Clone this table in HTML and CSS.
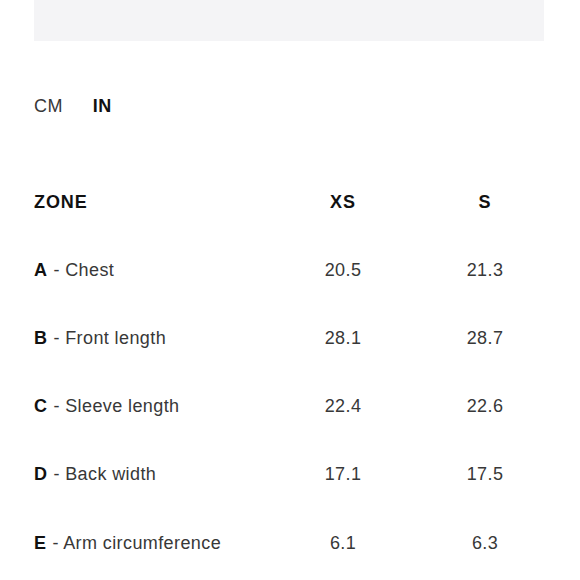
FILE: index.html
```html
<!DOCTYPE html>
<html>
<head>
<meta charset="utf-8">
<link rel="stylesheet" href="styles.css">
</head>
<body>
<div class="page">
  <div class="banner"></div>
  <div class="units">
    <span class="unit">CM</span>
    <span class="unit active">IN</span>
  </div>
  <div class="table">
    <div class="cell head">ZONE</div>
    <div class="cell head num">XS</div>
    <div class="cell head num">S</div>

    <div class="cell"><b>A</b> - Chest</div>
    <div class="cell num">20.5</div>
    <div class="cell num">21.3</div>

    <div class="cell"><b>B</b> - Front length</div>
    <div class="cell num">28.1</div>
    <div class="cell num">28.7</div>

    <div class="cell"><b>C</b> - Sleeve length</div>
    <div class="cell num">22.4</div>
    <div class="cell num">22.6</div>

    <div class="cell"><b>D</b> - Back width</div>
    <div class="cell num">17.1</div>
    <div class="cell num">17.5</div>

    <div class="cell"><b>E</b> - Arm circumference</div>
    <div class="cell num">6.1</div>
    <div class="cell num">6.3</div>
  </div>
</div>
</body>
</html>
```
FILE: styles.css
```css
html, body {
  margin: 0;
  padding: 0;
  background: #fff;
}
body {
  font-family: "Liberation Sans", Arial, sans-serif;
  font-size: 18px;
  letter-spacing: 0.4px;
  color: #383838;
}
.page {
  width: 510px;
  padding-left: 34px;
}
.banner {
  height: 41px;
  background: #f4f4f6;
}
.units {
  display: flex;
  gap: 30px;
  margin-top: 55px;
  line-height: 20px;
}
.unit.active {
  font-weight: bold;
  color: #111;
}
.table {
  margin-top: 53px;
  display: grid;
  grid-template-columns: 238px 142px 142px;
  grid-template-rows: 66.5px;
  grid-auto-rows: 68.25px;
}
.cell {
  display: flex;
  align-items: center;
  line-height: 20px;
}
.cell b {
  color: #111;
  margin-right: 6px;
}
.num {
  justify-content: center;
}
.head {
  font-weight: bold;
  color: #111;
  letter-spacing: 0.9px;
}
```
